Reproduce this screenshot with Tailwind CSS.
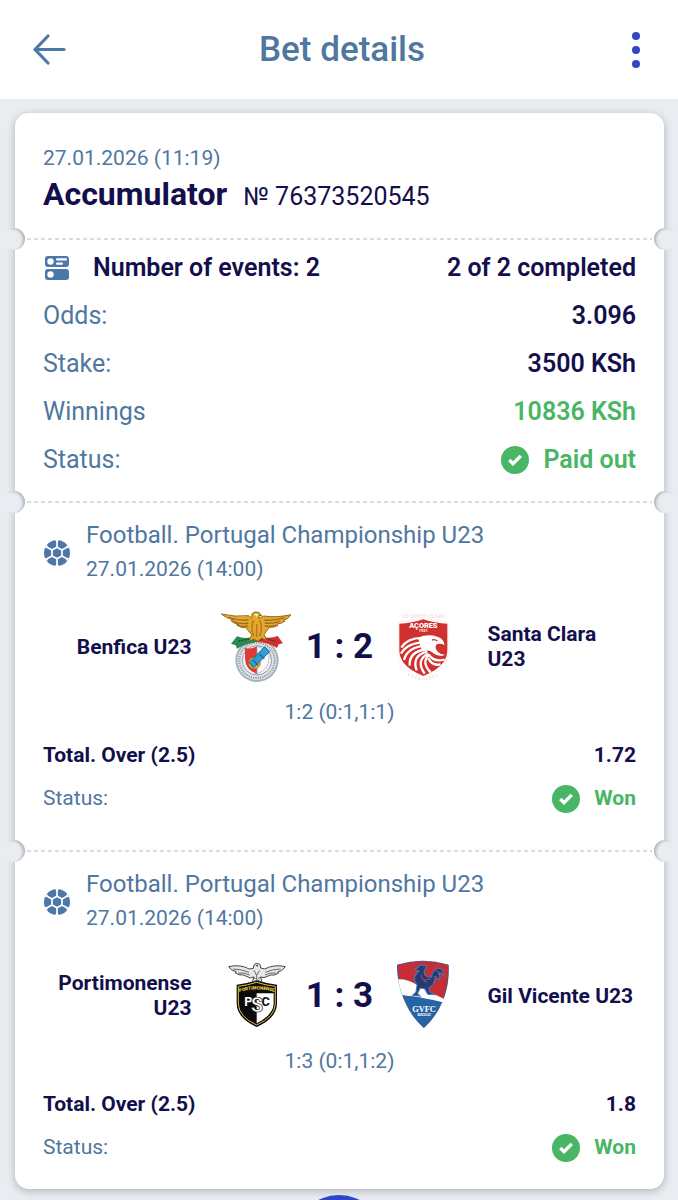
<!DOCTYPE html>
<html lang="en">
<head>
    <meta charset="UTF-8">
    <meta name="viewport" content="width=device-width, initial-scale=1.0">
    <title>Bet details</title>
    <script src="https://cdn.jsdelivr.net/npm/@tailwindcss/browser@4"></script>
</head>
<body class="bg-[#e9edf2] font-['Roboto',sans-serif] text-[#130f4c] min-h-screen overflow-x-hidden">
    <!-- Shared icons -->
    <svg class="hidden" aria-hidden="true">
        <symbol id="icon-check" viewBox="0 0 28 28">
            <circle cx="14" cy="14" r="14" fill="#48b665"/>
            <path d="M8.300 14l3.700 3.700 7.800-7.800" fill="none" stroke="#fff" stroke-width="3.400"/>
        </symbol>
        <symbol id="icon-football" viewBox="0 0 26 26">
            <circle cx="13" cy="13" r="13" fill="#4c77a8"/>
            <g fill="none" stroke="#fff" stroke-width="1.700">
                <path d="M13 7.200l5 2.900v5.800l-5 2.900-5-2.900v-5.800z"/>
                <path d="M13 7.200V0M18 10.100l6.300-3.600M18 15.900l6.300 3.600M13 18.800V26M8 15.900l-6.300 3.600M8 10.100L1.700 6.500"/>
            </g>
            <path d="M11 0h4l-2 2.500zM11 26h4l-2-2.500zM23 4.500l2.200 3.700-3.200-.4zM3 4.500L.8 8.200l3.200-.4zM23 21.500l2.200-3.700-3.200.4zM3 21.500L.8 17.800l3.200.4z" fill="#fff"/>
        </symbol>
    </svg>

    <header class="bg-white h-[99px] px-8 flex items-center justify-between">
        <button type="button" aria-label="Back" class="w-[42px] h-9">
            <svg class="w-9 h-9" viewBox="0 0 36 36" fill="none" stroke="#4c77a8" stroke-width="3.200" stroke-linecap="round" stroke-linejoin="round">
                <path d="M32 17.500H3M16 4L3 17.500 16 31"/>
            </svg>
        </button>
        <h1 class="text-[35px] leading-10 font-medium text-[#4f779f]">Bet details</h1>
        <button type="button" aria-label="More" class="w-9 h-9 flex justify-end">
            <svg class="w-5 h-9" viewBox="0 0 20 36" fill="#3146c4">
                <circle cx="10" cy="4" r="4"/>
                <circle cx="10" cy="18" r="4"/>
                <circle cx="10" cy="32" r="4"/>
            </svg>
        </button>
    </header>

    <main class="ml-[15px] mr-[14px] mt-[14px] mb-3 bg-white rounded-[14px] shadow-[0_2px_8px_rgba(0,0,0,0.25)]">
        <!-- Bet summary -->
        <section class="px-7 pt-[30px] pb-5">
            <time class="block text-[21px] leading-[30px] text-[#4f779f]">27.01.2026 (11:19)</time>
            <div class="flex items-baseline gap-4">
                <h2 class="text-[32px] leading-[42px] font-bold">Accumulator</h2>
                <span class="text-[25px] leading-[42px]">№ 76373520545</span>
            </div>
        </section>

        <div class="relative h-0.5 px-3">
            <div class="h-0.5 bg-[repeating-linear-gradient(90deg,#dcdcdc_0_4px,transparent_4px_7px)]"></div>
            <span class="absolute -left-[12px] -top-[10px] size-[22px] rounded-full bg-[#e9edf2] shadow-[inset_-3px_1px_3px_-1px_rgba(0,0,0,0.25)]"></span>
            <span class="absolute -right-[12px] -top-[10px] size-[22px] rounded-full bg-[#e9edf2] shadow-[inset_3px_1px_3px_-1px_rgba(0,0,0,0.25)]"></span>
        </div>

        <section class="px-7 pt-1 pb-[17px] text-[25px] leading-[48px]">
            <div class="flex items-center justify-between font-semibold">
                <div class="flex items-center">
                    <svg class="w-7 h-[26px] mr-[22px]" viewBox="0 0 28 26">
                        <rect x="2" y="1" width="24" height="11" rx="3" fill="#4c77a8"/>
                        <rect x="2" y="14" width="24" height="11" rx="3" fill="#4c77a8"/>
                        <g fill="#fff">
                            <circle cx="7.500" cy="6.500" r="3.200"/>
                            <circle cx="7.500" cy="19.500" r="3.200"/>
                            <rect x="13" y="3.200" width="11" height="2.400" rx="1"/>
                            <rect x="13" y="7.400" width="7" height="2.400" rx="1"/>
                        </g>
                    </svg>
                    <span>Number of events: 2</span>
                </div>
                <span>2 of 2 completed</span>
            </div>
            <dl>
                <div class="flex justify-between">
                    <dt class="text-[#4f779f]">Odds:</dt>
                    <dd class="font-semibold">3.096</dd>
                </div>
                <div class="flex justify-between">
                    <dt class="text-[#4f779f]">Stake:</dt>
                    <dd class="font-semibold">3500 KSh</dd>
                </div>
                <div class="flex justify-between">
                    <dt class="text-[#4f779f]">Winnings</dt>
                    <dd class="font-semibold text-[#48b665]">10836 KSh</dd>
                </div>
                <div class="flex justify-between">
                    <dt class="text-[#4f779f]">Status:</dt>
                    <dd class="flex items-center gap-[14px] font-semibold text-[#48b665]">
                        <svg class="size-7"><use href="#icon-check"/></svg>
                        Paid out
                    </dd>
                </div>
            </dl>
        </section>

        <div class="relative h-0.5 px-3">
            <div class="h-0.5 bg-[repeating-linear-gradient(90deg,#dcdcdc_0_4px,transparent_4px_7px)]"></div>
            <span class="absolute -left-[12px] -top-[10px] size-[22px] rounded-full bg-[#e9edf2] shadow-[inset_-3px_1px_3px_-1px_rgba(0,0,0,0.25)]"></span>
            <span class="absolute -right-[12px] -top-[10px] size-[22px] rounded-full bg-[#e9edf2] shadow-[inset_3px_1px_3px_-1px_rgba(0,0,0,0.25)]"></span>
        </div>

        <!-- Event 1 -->
        <section class="px-7 pt-4 pb-[30px]">
            <div class="flex items-center gap-[15px] text-[#4f779f]">
                <svg class="size-7 p-px shrink-0"><use href="#icon-football"/></svg>
                <div>
                    <h3 class="text-[24px] leading-8">Football. Portugal Championship U23</h3>
                    <time class="block text-[21px] leading-9">27.01.2026 (14:00)</time>
                </div>
            </div>
            <div class="mt-6 grid grid-cols-[1fr_70px_98px_70px_1fr] items-center">
                <div class="pr-[29px] text-right text-[21px] leading-[25px] font-bold">Benfica U23</div>
                <svg class="w-[70px] h-[72px]" viewBox="30 30 210 216">
                    <circle cx="138" cy="178" r="65" fill="#a9b2ba"/>
                    <circle cx="138" cy="178" r="59" fill="#e4e8eb"/>
                    <circle cx="138" cy="178" r="53" fill="none" stroke="#98a3ad" stroke-width="7" stroke-dasharray="4 3"/>
                    <circle cx="138" cy="178" r="44" fill="#f5f6f7" stroke="#8e9aa5" stroke-width="3"/>
                    <path d="M102 140q18 7 36-5v84q-35-13-36-46z" fill="#e23a35"/>
                    <path d="M138 135q18 12 36 5v33q-1 33-36 46z" fill="#fafafa" stroke="#9aa5af" stroke-width="2"/>
                    <circle cx="130" cy="186" r="18" fill="#efb02f" stroke="#966020" stroke-width="2"/>
                    <path d="M117 178l25 17M121 198l16-25" stroke="#966020" stroke-width="2"/>
                    <path d="M114 185l47-48 15 15-48 48z" fill="#2f9fd0" stroke="#126d9c" stroke-width="3"/>
                    <path d="M127 178l14 14M145 159l15 14" stroke="#186b9e" stroke-width="4"/>
                    <path d="M60 128l18-22q22 10 60 0v17q-35 5-60 20l-4-10z" fill="#2a8950"/>
                    <path d="M216 127l-16-22q-25 10-62 0v17q37 3 60 19l5-11z" fill="#d62f2d"/>
                    <path d="M83 121q25-8 52-8M143 113q29 0 51 8" stroke="#17402c" stroke-width="4" stroke-dasharray="4 3" fill="none"/>
                    <path d="M31 39q43 10 82 5l9 7 1-13q9-9 22-3l7 10-7-3-1 11 14-8q36 6 82-4-8 13-22 17l4 2q-10 8-24 9l3 4q-12 7-26 6l-16 22 8 17-16-6-10 9-12-7-15 7 8-20-18-21q-15 2-27-9l6-1q-15-2-24-12l8-2q-22-4-36-17z" fill="#e2a92c" stroke="#99661e" stroke-width="3"/>
                    <path d="M52 49q33 12 61 7M66 61q26 10 46 5M78 73q20 5 34 2M220 50q-32 11-60 7M206 61q-24 9-45 5M195 73q-16 4-34 2" fill="none" stroke="#a26c1f" stroke-width="4"/>
                    <path d="M127 58q-9 24 1 48M146 57q10 22 0 49M137 70v39" fill="none" stroke="#bb7b22" stroke-width="5"/>
                    <path d="M129 40l13-2-5 9z" fill="#fff4c8"/>
                </svg>
                <div class="text-center text-[35px] leading-10 font-bold whitespace-nowrap">1 : 2</div>
                <svg class="w-[70px] h-[72px]" viewBox="9 30 210 216">
                    <text x="112" y="51" font-family="Roboto, sans-serif" font-size="16" font-weight="700" text-anchor="middle" fill="#fae3e3">CD SANTA CLARA</text>
                    <path d="M38 64q40-1 74-13 36 12 74 13v88q0 24-12 41-18 24-62 44-44-20-63-44-11-17-11-41z" fill="#fff" stroke="#fae3e3" stroke-width="3" stroke-dasharray="5 4"/>
                    <path d="M40 68q38-1 72-13 34 12 72 13v77q0 23-11 38-17 24-61 42-44-18-61-42-11-15-11-38z" fill="#d0312f"/>
                    <text x="112" y="81" font-family="Roboto, sans-serif" font-size="22" font-weight="900" text-anchor="middle" fill="#fff">AÇORES</text>
                    <text x="112" y="94" font-family="Roboto, sans-serif" font-size="12" font-weight="700" text-anchor="middle" fill="#fff">1921</text>
                    <!-- Eagle: head, then feathers sweeping down to the left -->
                    <path d="M96 110q30-13 58-3 20 6 22 26-12-7-24-3-8 11 4 23 9 9 22 8-20 9-37-5-14-12-32-4z" fill="#fff"/>
                    <g fill="none" stroke="#fff" stroke-width="7">
                        <path d="M46 140Q66 108 118 111M45 158Q64 124 118 124M54 177Q64 138 120 134M71 194Q68 152 122 144M92 208Q76 164 124 152M116 218Q88 178 126 158"/>
                        <path d="M134 214Q104 184 130 160M128 160Q142 184 176 176M127 172Q138 196 164 190"/>
                    </g>
                    <path d="M138 117q9-3 16 3" fill="none" stroke="#d0312f" stroke-width="4"/>
                    <path d="M66 220q46 30 94 0" fill="none" stroke="#fae3e3" stroke-width="6" stroke-dasharray="6 5"/>
                </svg>
                <div class="pl-[29px] text-[21px] leading-[25px] font-bold">Santa Clara U23</div>
            </div>
            <p class="mt-[11px] text-center text-[21px] leading-9 text-[#4f779f]">1:2 (0:1,1:1)</p>
            <div class="mt-1 flex justify-between text-[21px] leading-[43px] font-bold">
                <span>Total. Over (2.5)</span>
                <span>1.72</span>
            </div>
            <div class="flex justify-between text-[21px] leading-[43px]">
                <span class="text-[#4f779f]">Status:</span>
                <span class="flex items-center gap-[14px] font-bold text-[#48b665]">
                    <svg class="size-7"><use href="#icon-check"/></svg>
                    Won
                </span>
            </div>
        </section>

        <div class="relative h-0.5 px-3">
            <div class="h-0.5 bg-[repeating-linear-gradient(90deg,#dcdcdc_0_4px,transparent_4px_7px)]"></div>
            <span class="absolute -left-[12px] -top-[10px] size-[22px] rounded-full bg-[#e9edf2] shadow-[inset_-3px_1px_3px_-1px_rgba(0,0,0,0.25)]"></span>
            <span class="absolute -right-[12px] -top-[10px] size-[22px] rounded-full bg-[#e9edf2] shadow-[inset_3px_1px_3px_-1px_rgba(0,0,0,0.25)]"></span>
        </div>

        <!-- Event 2 -->
        <section class="px-7 pt-4 pb-5">
            <div class="flex items-center gap-[15px] text-[#4f779f]">
                <svg class="size-7 p-px shrink-0"><use href="#icon-football"/></svg>
                <div>
                    <h3 class="text-[24px] leading-8">Football. Portugal Championship U23</h3>
                    <time class="block text-[21px] leading-9">27.01.2026 (14:00)</time>
                </div>
            </div>
            <div class="mt-6 grid grid-cols-[1fr_70px_98px_70px_1fr] items-center">
                <div class="pr-[29px] text-right text-[21px] leading-[25px] font-bold">Portimonense U23</div>
                <svg class="w-[70px] h-[72px]" viewBox="15 30 210 216">
                    <path d="M62 104q30-3 60-13 30 10 61 13v58q-2 43-61 69-58-26-60-69z" fill="#0b0b0b"/>
                    <path d="M67 109q27-3 55-12 28 9 56 12v53q-2 39-56 63-53-24-55-63z" fill="none" stroke="#dcc04a" stroke-width="3"/>
                    <path d="M122 130h51v32q-2 33-51 58z" fill="#fff"/>
                    <path id="crest-arc" d="M66 127q56-17 113 0" fill="none"/>
                    <text font-family="Roboto, sans-serif" font-size="14" font-weight="900" fill="#ecd23c"><textPath href="#crest-arc" startOffset="50%" text-anchor="middle">PORTIMONENSE</textPath></text>
                    <g font-family="Roboto, sans-serif" font-weight="700" text-anchor="middle">
                        <text x="97" y="168" font-size="38" fill="#fff">P</text>
                        <text x="149" y="168" font-size="38" fill="#0b0b0b">C</text>
                        <text x="123" y="187" font-size="60" fill="#fff" stroke="#0b0b0b" stroke-width="2">S</text>
                    </g>
                    <path d="M38 50q34-8 62 7l12-2q-1-13 10-15 13 0 12 14l12 3q29-15 62-7-10 15-23 16l3 3q-12 9-24 6l-20 8-10-2 4 15-14-5-15 5 5-15-11 3-21-9q-14 2-25-7l4-3q-17-3-23-15z" fill="#e8e8e8" stroke="#454545" stroke-width="3"/>
                    <path d="M52 57q27 1 47 10M66 69q19-2 35 6M194 57q-27 1-46 10M180 69q-19-2-33 6M114 61l8 15 9-15M122 76v13M112 80l7 8M133 80l-7 8" fill="none" stroke="#666" stroke-width="3"/>
                    <path d="M118 45l9-1-2 6z" fill="#303030"/>
                </svg>
                <div class="text-center text-[35px] leading-10 font-bold whitespace-nowrap">1 : 3</div>
                <svg class="w-[70px] h-[72px]" viewBox="9 30 210 216">
                    <g transform="translate(-7 -3) scale(1.140 1)">
                        <path d="M36 48q67-23 134 0 3 61-17 112-15 42-47 76-32-31-51-82-19-52-19-106z" fill="#2764a6" stroke="#26456d" stroke-width="2"/>
                        <path d="M37 49q66-23 132 0 2 60-15 107l-45-16-65-30q-7-30-7-61z" fill="#c52e36"/>
                        <path d="M38 91q26-1 50 17 19 14 70 41l-3 11q-52-14-79-18-19-2-27-4-8-24-11-47z" fill="#fff"/>
                        <path d="M92 54l7-7 6 3 8 0-2 9-4 4 0 12q8 12 19 9 2-21 15-26 17-2 16 21-7-11-13-6 6 7 3 20-6-8-12-6-1 21-16 29l2 12 13 9-18-1-8-17-12-2-7 17 7 7-20-2 9-9 3-22q-12-16-3-32l8-10-12-4z" fill="#223b72" stroke="#487ab0" stroke-width="3"/>
                        <path d="M98 78q3 17 16 21M104 94l20-4M133 67q8-4 12 3M131 82l9 1" fill="none" stroke="#b8425c" stroke-width="3"/>
                    </g>
                    <text x="114" y="187" font-family="Liberation Serif, serif" font-size="25" font-weight="700" text-anchor="middle" fill="#fff">GVFC</text>
                    <text x="114" y="197" font-family="Roboto, sans-serif" font-size="8" font-weight="700" text-anchor="middle" fill="#fff">BARCELOS</text>
                </svg>
                <div class="pl-[29px] text-[21px] leading-[25px] font-bold">Gil Vicente U23</div>
            </div>
            <p class="mt-[11px] text-center text-[21px] leading-9 text-[#4f779f]">1:3 (0:1,1:2)</p>
            <div class="mt-1 flex justify-between text-[21px] leading-[43px] font-bold">
                <span>Total. Over (2.5)</span>
                <span>1.8</span>
            </div>
            <div class="flex justify-between text-[21px] leading-[43px]">
                <span class="text-[#4f779f]">Status:</span>
                <span class="flex items-center gap-[14px] font-bold text-[#48b665]">
                    <svg class="size-7"><use href="#icon-check"/></svg>
                    Won
                </span>
            </div>
        </section>
    </main>

    <!-- Floating button, mostly below the fold -->
    <button type="button" aria-label="Open coupon" class="fixed left-1/2 -bottom-[83px] -ml-11 size-[88px] rounded-full bg-[#2f45cb]"></button>
</body>
</html>
